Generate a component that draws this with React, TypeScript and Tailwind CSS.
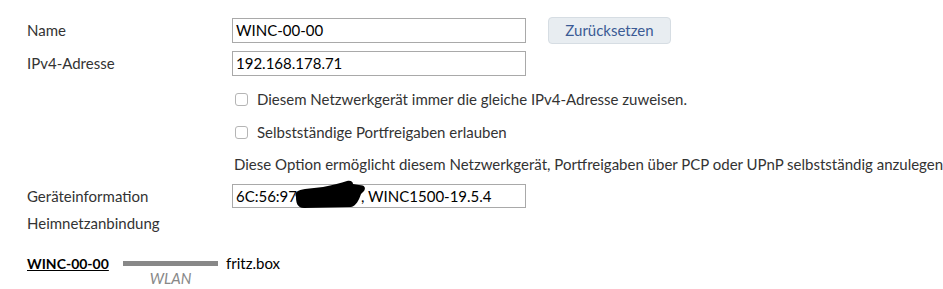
import React from 'react';

const font = { fontFamily: 'Lato, "Open Sans", sans-serif' };

function Field({ value }: { value: string }) {
  return (
    <div className="flex h-[25px] w-[294px] items-center border border-[#a9a9a9] bg-white px-[3px] text-[15px] text-black">
      {value}
    </div>
  );
}

function Check({ label }: { label: string }) {
  return (
    <label className="flex h-[33px] items-center pl-[3px]">
      <span className="h-[13px] w-[13px] rounded-[3px] border border-[#b5b5b5] bg-white" />
      <span className="ml-[9px]">{label}</span>
    </label>
  );
}

// black scribble that hides part of the MAC address
function Redaction() {
  return (
    <svg
      className="absolute left-[60px] top-[-5px]"
      width="76"
      height="30"
      viewBox="0 0 76 30"
    >
      <path
        d="M3 17 C1 12 5 10 12 9 L30 7 C40 5 48 3 54 1 C58 0 60 2 60 4 L66 5 C72 5 73 8 71 11 L68 14 C66 20 63 26 58 27 L11 28 C4 28 3 22 3 17 Z"
        fill="#000"
      />
    </svg>
  );
}

export default function App() {
  return (
    <div className="h-[289px] w-[943px] overflow-hidden bg-white text-[15px] text-[#333]" style={font}>
      <div className="flex flex-col pl-[27px] pt-[18px]">
        <div className="flex h-[25px] items-center">
          <div className="w-[205px]">Name</div>
          <Field value="WINC-00-00" />
          <button className="ml-[22px] h-[27px] w-[123px] rounded-[4px] border border-[#d6dde3] bg-[#e8edf1] text-[15px] text-[#3b5b95]">
            Zurücksetzen
          </button>
        </div>
        <div className="mt-[8px] flex h-[25px] items-center">
          <div className="w-[205px]">IPv4-Adresse</div>
          <Field value="192.168.178.71" />
        </div>
        <div className="mt-[7px] flex flex-col pl-[205px]">
          <Check label="Diesem Netzwerkgerät immer die gleiche IPv4-Adresse zuweisen." />
          <Check label="Selbstständige Portfreigaben erlauben" />
          <div className="flex h-[31px] items-center whitespace-nowrap pl-[2px]">
            Diese Option ermöglicht diesem Netzwerkgerät, Portfreigaben über PCP oder UPnP selbstständig anzulegen.
          </div>
        </div>
        <div className="mt-[4px] flex h-[24px] items-center">
          <div className="w-[205px]">Geräteinformation</div>
          <div className="relative flex h-[24px] w-[294px] items-center border border-[#a9a9a9] bg-white px-[3px] text-[15px] text-black">
            <span>6C:56:97</span>
            <span className="inline-block w-[64px] overflow-hidden whitespace-nowrap text-transparent">:00:00:00</span>
            <span>, WINC1500-19.5.4</span>
            <Redaction />
          </div>
        </div>
        <div className="flex h-[30px] items-center">Heimnetzanbindung</div>
        <div className="mt-[14px] flex items-start">
          <div className="w-[96px]">
            <a className="h-[22px] text-[14px] font-bold leading-[22px] text-black underline">WINC-00-00</a>
          </div>
          <div className="flex flex-col items-center pt-[9px]">
            <div className="h-[5px] w-[95px] bg-[#888]" />
            <div className="mt-[4px] text-[15px] italic leading-[16px] text-[#888]">WLAN</div>
          </div>
          <div className="ml-[8px] h-[22px] leading-[22px] text-black">fritz.box</div>
        </div>
      </div>
    </div>
  );
}
